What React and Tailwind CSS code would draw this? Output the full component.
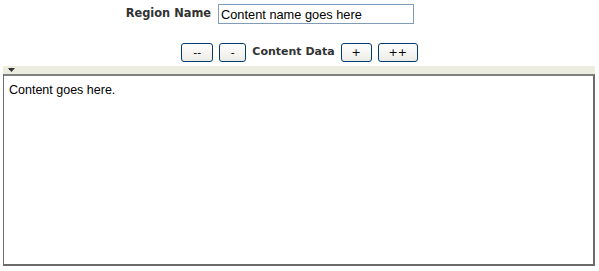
import React from "react";

const btn =
  "h-[19px] rounded-[3px] border border-[#003c74] bg-gradient-to-b from-white to-[#ecebe6] text-[11px] text-black font-['DejaVu_Sans',sans-serif] leading-none";

export default function App() {
  return (
    <div className="w-[599px] h-[271px] bg-white font-['Liberation_Sans',Arial,sans-serif]">
      <div className="flex items-center pt-[4px]">
        <div className="w-[211px] text-right text-[11.4px] font-bold text-[#333] font-['DejaVu_Sans',Verdana,sans-serif]">
          Region Name
        </div>
        <input
          className="ml-[7px] w-[196px] h-[20px] border border-[#7f9db9] px-[2px] text-[12.8px] text-black outline-none"
          defaultValue="Content name goes here"
        />
      </div>
      <div className="flex items-center justify-center mt-[19px]">
        <button className={`${btn} w-[32px]`}>--</button>
        <button className={`${btn} w-[27px] ml-[6px]`}>-</button>
        <span className="mx-[6px] text-[11px] font-bold text-[#333] font-['DejaVu_Sans',Verdana,sans-serif]">
          Content Data
        </span>
        <button className={`${btn} w-[31px]`}>+</button>
        <button className={`${btn} w-[40px] ml-[6px]`}>++</button>
      </div>
      <div className="mx-[3px] mt-[4px] w-[592px]">
        <div className="h-[8px] bg-[#ecedde] flex items-center pl-[5px]">
          <svg width="7" height="4" viewBox="0 0 7 4">
            <polygon points="0,0 7,0 3.5,4" fill="#333" />
          </svg>
        </div>
        <div className="h-[192px] border-t-2 border-l border-r-2 border-b-2 border-[#6b6b6b] border-t-[#808080] px-[5px] pt-[5px] text-[12.5px] text-black">
          Content goes here.
        </div>
      </div>
    </div>
  );
}
